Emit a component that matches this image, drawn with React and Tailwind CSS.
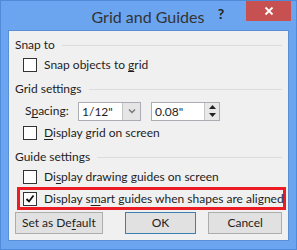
const font = { fontFamily: 'Lato, "Noto Sans", sans-serif' };

const Box = ({ checked }) => (
  <span className="w-[14px] h-[14px] border border-[#333] bg-white flex items-center justify-center shrink-0">
    {checked && (
      <svg width="10" height="10" viewBox="0 0 10 10">
        <path d="M1.5 5 L4 7.5 L8.5 1.5" stroke="#111" strokeWidth="1.8" fill="none" />
      </svg>
    )}
  </span>
);

const Check = ({ checked, inset = true, children }) => (
  <div className={`flex items-center gap-[7px] h-[20px] whitespace-nowrap ${inset ? "pl-[8px]" : ""}`}>
    <Box checked={checked} />
    <span>{children}</span>
  </div>
);

const Group = ({ title, first }) => (
  <div className={`flex items-center gap-[7px] h-[20px] ${first ? "" : "mt-[4px]"}`}>
    <span>{title}</span>
    <span className="flex-1 h-px bg-[#dcdcdc]" />
  </div>
);

const U = ({ children }) => <span className="underline underline-offset-2">{children}</span>;

const Button = ({ children, className }) => (
  <button className={`h-[22px] flex items-center justify-center bg-[#e1e1e1] border ${className}`}>
    {children}
  </button>
);

export default function App() {
  return (
    <div
      className="w-[297px] h-[250px] bg-[#6ba5ef] border border-[#4f8bd9] flex flex-col text-[12px] text-[#1e1e1e]"
      style={font}
    >
      {/* Title bar */}
      <div className="h-[29px] flex items-start">
        <div className="flex-1 text-center text-[16px] text-[#333] pt-[4px] pl-[84px]">Grid and Guides</div>
        <div className="w-[20px] text-center font-bold text-[14px] text-[#222] pt-[2px] mr-[15px]">?</div>
        <div className="w-[45px] h-[20px] bg-[#c75050] flex items-center justify-center mr-[5px]">
          <svg width="10" height="10" viewBox="0 0 10 10">
            <path d="M1.5 1.5 L8.5 8.5 M8.5 1.5 L1.5 8.5" stroke="#fff" strokeWidth="1.8" />
          </svg>
        </div>
      </div>

      {/* Body */}
      <div className="mx-[7px] h-[211px] bg-[#f0f0f0] border border-[#5a8fd6] px-[6px] pt-[4px]">
        <Group title="Snap to" first />
        <Check>
          Snap objects to <U>g</U>rid
        </Check>
        <Group title="Grid settings" />
        <div className="flex items-center h-[24px] pl-[10px]">
          <span className="w-[53px]">
            S<U>p</U>acing:
          </span>
          <div className="w-[63px] h-[19px] bg-white border border-[#abadb3] flex">
            <span className="flex-1 pl-[3px] leading-[17px]">1/12"</span>
            <span className="w-[18px] bg-[#e5e5e5] border-l border-[#c5c5c5] flex items-center justify-center">
              <svg width="8" height="6" viewBox="0 0 8 6">
                <path d="M1 1.5 L4 4.5 L7 1.5" stroke="#777" strokeWidth="1.4" fill="none" />
              </svg>
            </span>
          </div>
          <div className="ml-[10px] w-[69px] h-[19px] bg-white border border-[#abadb3] flex">
            <span className="flex-1 pl-[3px] leading-[17px]">0.08"</span>
            <span className="w-[15px] bg-[#e8e8e8] border-l border-[#c5c5c5] flex flex-col items-center justify-around">
              <svg width="7" height="4" viewBox="0 0 7 4">
                <path d="M0 4 L3.5 0 L7 4 Z" fill="#222" />
              </svg>
              <svg width="7" height="4" viewBox="0 0 7 4">
                <path d="M0 0 L3.5 4 L7 0 Z" fill="#222" />
              </svg>
            </span>
          </div>
        </div>
        <Check>
          <U>D</U>isplay grid on screen
        </Check>
        <Group title="Guide settings" />
        <Check>
          Di<U>s</U>play drawing guides on screen
        </Check>
        <div className="border-[3px] border-[#ec1c24] ml-[2px] -mr-[4px] h-[23px] flex items-center pl-[3px]">
          <Check checked inset={false}>
            Display s<U>m</U>art guides when shapes are aligned
          </Check>
        </div>
        <div className="flex items-center mt-[2px]">
          <Button className="w-[88px] border-[#adadad]">
            Set as De<U>f</U>ault
          </Button>
          <Button className="w-[72px] ml-[22px] border-[#3c7fb1]">OK</Button>
          <Button className="w-[74px] ml-[12px] border-[#adadad]">Cancel</Button>
        </div>
      </div>
    </div>
  );
}
